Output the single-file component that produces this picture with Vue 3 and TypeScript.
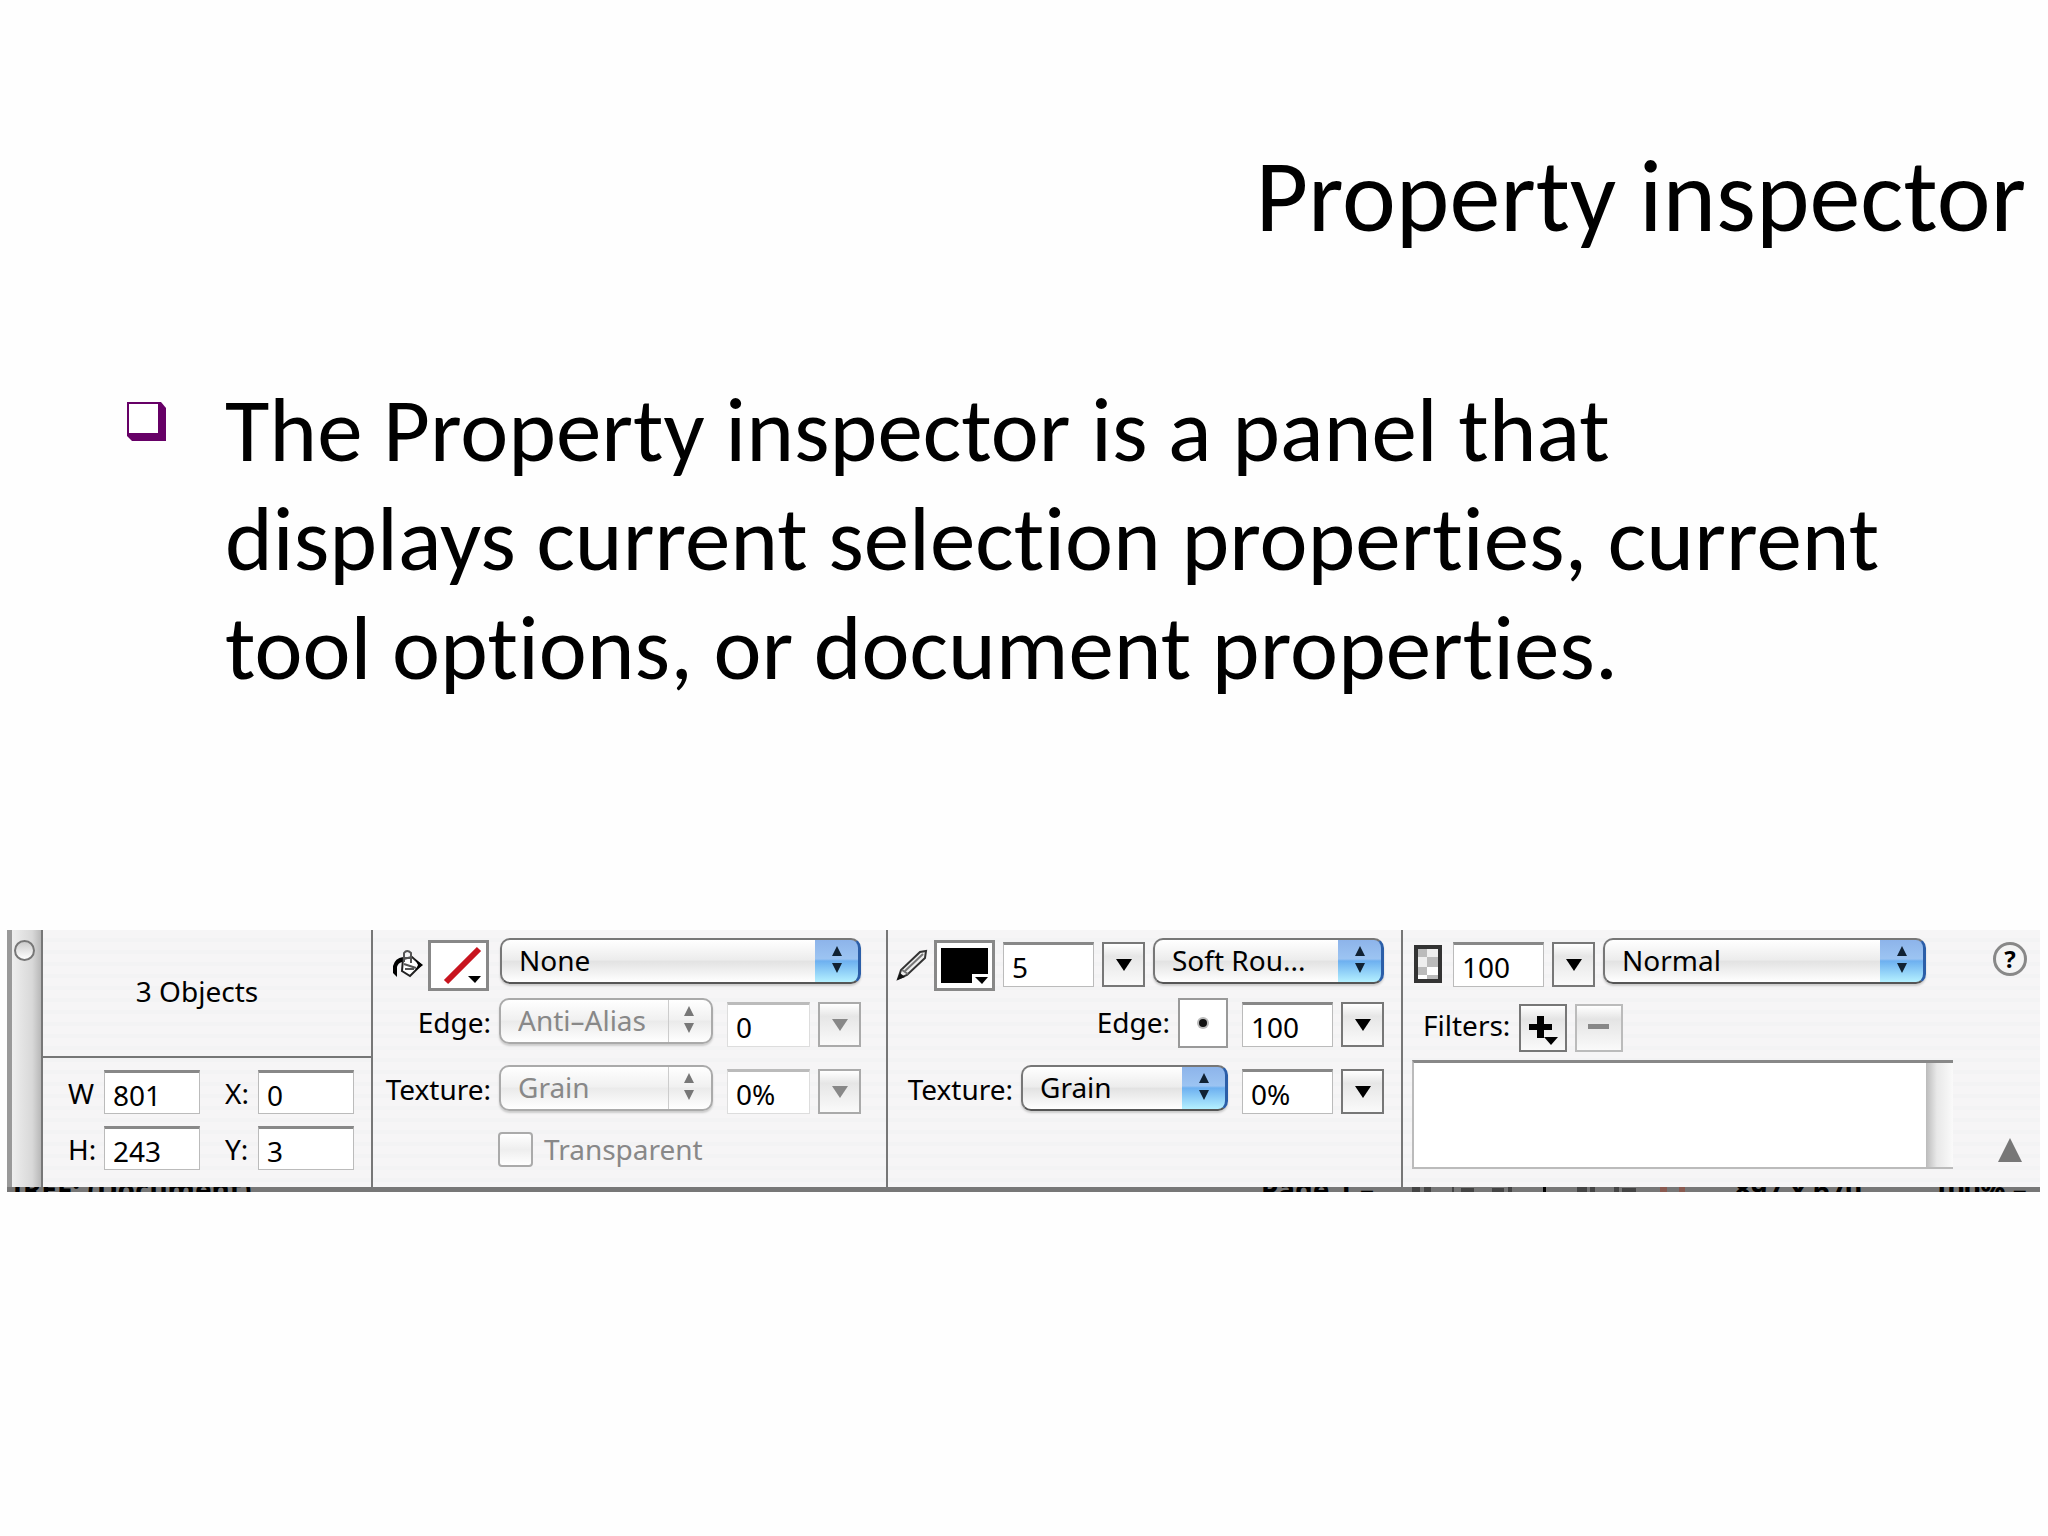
<script setup lang="ts">
import { ref } from 'vue'

const size = ref({ w: '801', h: '243', x: '0', y: '3' })
const fill = ref({ edge: '0', texture: '0%', transparent: false })
const stroke = ref({ size: '5', edge: '100', texture: '0%' })
const opacity = ref('100')
</script>

<template>
  <main class="slide">
    <h1>Property inspector</h1>
    <ul class="points">
      <li>
        <svg class="bullet" width="40" height="40" viewBox="0 0 40 40" aria-hidden="true">
          <path d="M0 0H34L39 6V39H5L0 34Z" fill="#606" />
          <path d="M2 2H31V31H2Z" fill="#fff" />
        </svg>
        <p>The Property inspector is a panel that displays current selection properties, current tool options, or document properties.</p>
      </li>
    </ul>

    <section class="panel" aria-label="Property inspector">
      <div class="sections">
        <div class="handle"><button class="close" aria-label="Close"></button></div>

        <div class="group object">
          <h2>3 Objects</h2>
          <div class="dims">
            <label for="w">W</label><input id="w" v-model="size.w" />
            <label for="x">X:</label><input id="x" v-model="size.x" />
            <label for="h">H:</label><input id="h" v-model="size.h" />
            <label for="y">Y:</label><input id="y" v-model="size.y" />
          </div>
        </div>

        <div class="group fill">
          <div class="row">
            <div class="lead icons">
              <svg class="tool" width="32" height="32" viewBox="0 0 32 32" aria-hidden="true">
                <path d="M11 10L20 8L29 16L18 27L10 22Z" fill="#fff" stroke="#222" stroke-width="2" />
                <path d="M12 13V4Q15 0 19 4V14M11 9H20M12 15L24 19M13 20H22" fill="none" stroke="#555" stroke-width="2" />
                <path d="M11 8Q3 9 1 17V24L5 28V18Q6 14 10 13Z" fill="#000" />
                <path d="M23 10L31 16L23 22L26 16Z" fill="#000" />
              </svg>
              <button class="swatch" aria-label="Fill color">
                <svg width="56" height="46" viewBox="0 0 56 46">
                  <path d="M15 39L48 6" stroke="#c8141e" stroke-width="6" />
                  <path d="M37 33H50L44 40Z" fill="#000" />
                </svg>
              </button>
            </div>
            <span class="popup wide">
              <select aria-label="Fill type"><option>None</option></select>
              <svg width="16" height="28" viewBox="0 0 16 28"><path d="M8 0L13 10H3ZM8 27L13 17H3Z" /></svg>
            </span>
          </div>
          <div class="row">
            <label class="lead" for="fe">Edge:</label>
            <span class="popup off">
              <select id="fe" disabled><option>Anti–Alias</option></select>
              <svg width="16" height="28" viewBox="0 0 16 28"><path d="M8 0L13 10H3ZM8 27L13 17H3Z" /></svg>
            </span>
            <input v-model="fill.edge" class="dim" aria-label="Edge amount" />
            <button class="arrow" disabled aria-label="Edge slider"><svg width="18" height="14" viewBox="0 0 18 14"><path d="M1 1H17L9 13Z" /></svg></button>
          </div>
          <div class="row">
            <label class="lead" for="ft">Texture:</label>
            <span class="popup off">
              <select id="ft" disabled><option>Grain</option></select>
              <svg width="16" height="28" viewBox="0 0 16 28"><path d="M8 0L13 10H3ZM8 27L13 17H3Z" /></svg>
            </span>
            <input v-model="fill.texture" class="dim" aria-label="Texture amount" />
            <button class="arrow" disabled aria-label="Texture slider"><svg width="18" height="14" viewBox="0 0 18 14"><path d="M1 1H17L9 13Z" /></svg></button>
          </div>
          <div class="check">
            <input id="tr" v-model="fill.transparent" type="checkbox" disabled />
            <label for="tr">Transparent</label>
          </div>
        </div>

        <div class="group stroke">
          <div class="row">
            <div class="icons">
              <svg class="tool" width="32" height="32" viewBox="0 0 32 32" aria-hidden="true">
                <path d="M2 30L5 21L24 3L30 2L29 9L11 26Z" fill="#eee" stroke="#333" stroke-width="2" />
                <path d="M6 21L12 25M9 22L27 5" stroke="#777" stroke-width="2" />
                <path d="M1 31L4 24L9 28Z" fill="#111" />
              </svg>
              <button class="swatch" aria-label="Stroke color">
                <svg width="56" height="46" viewBox="0 0 56 46">
                  <path d="M4 5H51V40H4Z" fill="#000" />
                  <path d="M35 31H54V44H35Z" fill="#fff" />
                  <path d="M38 34H51L45 41Z" fill="#000" />
                </svg>
              </button>
            </div>
            <input v-model="stroke.size" aria-label="Tip size" />
            <button class="arrow" aria-label="Tip size slider"><svg width="18" height="14" viewBox="0 0 18 14"><path d="M1 1H17L9 13Z" /></svg></button>
            <span class="popup medium">
              <select aria-label="Stroke category"><option>Soft Rou...</option></select>
              <svg width="16" height="28" viewBox="0 0 16 28"><path d="M8 0L13 10H3ZM8 27L13 17H3Z" /></svg>
            </span>
          </div>
          <div class="row">
            <label for="se">Edge:</label>
            <button class="tip" aria-label="Tip preview"><svg width="14" height="14" viewBox="0 0 14 14"><circle cx="7" cy="7" r="6" fill="#bbb" /><circle cx="7" cy="7" r="4" fill="#111" /></svg></button>
            <input id="se" v-model="stroke.edge" />
            <button class="arrow" aria-label="Edge slider"><svg width="18" height="14" viewBox="0 0 18 14"><path d="M1 1H17L9 13Z" /></svg></button>
          </div>
          <div class="row">
            <label for="st">Texture:</label>
            <span class="popup small">
              <select id="st"><option>Grain</option></select>
              <svg width="16" height="28" viewBox="0 0 16 28"><path d="M8 0L13 10H3ZM8 27L13 17H3Z" /></svg>
            </span>
            <input v-model="stroke.texture" aria-label="Texture amount" />
            <button class="arrow" aria-label="Texture slider"><svg width="18" height="14" viewBox="0 0 18 14"><path d="M1 1H17L9 13Z" /></svg></button>
          </div>
        </div>

        <div class="group effects">
          <div class="body">
            <div class="row">
              <svg class="opacity" width="28" height="38" viewBox="0 0 28 38" aria-hidden="true">
                <path d="M2 2H26V36H2Z" fill="#fff" stroke="#333" stroke-width="4" />
                <path d="M4 4H13V12H4ZM13 12H24V22H13ZM4 22H13V30H4ZM13 30H24V34H13Z" fill="#bbb" />
                <path d="M4 12H13V22H4ZM13 4H24V12H13Z" fill="#eee" />
              </svg>
              <input v-model="opacity" aria-label="Opacity" />
              <button class="arrow" aria-label="Opacity slider"><svg width="18" height="14" viewBox="0 0 18 14"><path d="M1 1H17L9 13Z" /></svg></button>
              <span class="popup stretch">
                <select aria-label="Blend mode"><option>Normal</option></select>
                <svg width="16" height="28" viewBox="0 0 16 28"><path d="M8 0L13 10H3ZM8 27L13 17H3Z" /></svg>
              </span>
            </div>
            <div class="row filters">
              <span>Filters:</span>
              <button class="square" aria-label="Add filter"><svg width="42" height="42" viewBox="0 0 42 42"><path d="M15 9H22V17H30V23H22V31H15V23H7V17H15Z" /><path d="M22 30H36L29 38Z" /></svg></button>
              <button class="square" disabled aria-label="Remove filter"><svg width="42" height="42" viewBox="0 0 42 42"><path d="M10 17H31V22H10Z" /></svg></button>
            </div>
            <div class="list"><div class="track"></div></div>
          </div>
          <div class="side">
            <button class="help" aria-label="Help">?</button>
            <button class="collapse" aria-label="Collapse"><svg width="26" height="24" viewBox="0 0 26 24"><path d="M13 0L25 24H1Z" fill="#777" /></svg></button>
          </div>
        </div>
      </div>
      <div class="status" aria-hidden="true">
        <span>IREF: (Document)</span>
        <span>Page 1 –</span>
        <svg width="280" height="5" viewBox="0 0 280 5">
          <path d="M0 0H8V5H0ZM12 0H19V5H12ZM40 0H42V5H40ZM49 1H62V5H49ZM80 1H92V5H80ZM96 0H100V5H96ZM165 0H175V5H165ZM178 0H183V5H178ZM202 0H207V5H202ZM210 1H224V5H210Z" fill="#444" />
          <path d="M131 0H134V5H131Z" fill="#000" />
          <path d="M248 0H255V5H248ZM267 0H273V5H267Z" fill="#8a5a50" />
        </svg>
        <span>897 x 670</span>
        <span>100% –</span>
      </div>
    </section>
  </main>
</template>

<style>
body {
  margin: 0;
  background: #fefefe;
}
</style>

<style scoped>
* {
  box-sizing: border-box;
}
.slide {
  padding: 142px 8px 0 7px;
  color: #000;
  font-family: Carlito, Calibri, Lato, sans-serif;
  font-variant-ligatures: none;
}
h1 {
  margin: 0 14px 0 0;
  font-size: 102px;
  line-height: 108px;
  font-weight: 400;
  text-align: right;
}
.points {
  margin: 125px 120px 0;
  padding: 0;
  list-style: none;
}
.points li {
  display: flex;
  align-items: flex-start;
  gap: 58px;
}
.bullet {
  flex: none;
  margin-top: 27px;
}
.points p {
  margin: 0;
  font-size: 91px;
  line-height: 109px;
}
.panel {
  margin-top: 228px;
  font-family: "Noto Sans", sans-serif;
  font-size: 28px;
  line-height: 34px;
}
.sections {
  display: grid;
  grid-template-columns: 36px minmax(0, 330fr) minmax(0, 515fr) minmax(0, 515fr) minmax(0, 637fr);
  height: 257px;
  background: repeating-linear-gradient(#f6f5f6 0 8px, #f3f3f4 8px 12px);
}
.status {
  display: grid;
  grid-template-columns: 1252fr 151fr 324fr 198fr 108fr;
  height: 5px;
  padding-left: 5px;
  overflow: hidden;
  background: #777;
  font-weight: 700;
  line-height: 5px;
  white-space: nowrap;
}
.handle {
  padding: 10px 0 0 2px;
  border-left: 5px solid #999;
  border-right: 2px solid #777;
  background: linear-gradient(90deg, #eee, #d8d8d8 70%, #b8b8b8);
}
.group {
  border-right: 2px solid #777;
}
button,
input,
select {
  margin: 0;
  padding: 0;
  border-radius: 0;
  color: #000;
  font: inherit;
  appearance: none;
}
.close {
  display: block;
  width: 21px;
  height: 21px;
  border: 2px solid #777;
  border-radius: 50%;
  background: linear-gradient(#ccc, #fff);
}
h2 {
  display: flex;
  align-items: center;
  justify-content: center;
  height: 128px;
  margin: 0;
  padding: 0 20px 4px 0;
  border-bottom: 2px solid #777;
  font-size: 28px;
  font-weight: 400;
}
.dims {
  display: grid;
  grid-template-columns: 36px 96px 58px 96px;
  row-gap: 12px;
  justify-content: center;
  padding: 12px 0 0 8px;
}
.dims label {
  padding-top: 6px;
}
.dims label:nth-of-type(even) {
  padding-left: 25px;
}
input {
  width: 91px;
  height: 45px;
  padding: 3px 0 0 8px;
  border: 1px solid #bbb;
  border-top: 3px solid #888;
  background: #fff;
}
.dims input {
  width: 96px;
  height: 44px;
}
.fill {
  padding: 8px 25px 0 8px;
}
.row {
  display: flex;
  align-items: flex-start;
  justify-content: flex-end;
  gap: 8px;
  height: 67px;
}
.row:first-child {
  height: 60px;
}
.row > input,
.row > .arrow {
  margin-top: 4px;
}
.row > label {
  padding-top: 7px;
}
.lead {
  flex: 1;
  text-align: right;
}
.icons {
  display: flex;
  justify-content: flex-end;
  gap: 4px;
}
.fill .icons {
  padding-right: 3px;
}
.tool {
  margin-top: 11px;
}
.swatch {
  display: block;
  width: 61px;
  height: 51px;
  margin-top: 2px;
  border: 3px solid #888;
  background: #fff;
}
.swatch svg {
  display: block;
}
.popup {
  position: relative;
  flex: none;
  width: 214px;
  height: 46px;
}
.popup select {
  width: 100%;
  height: 100%;
  padding: 0 48px 3px 17px;
  border: 2px solid #777;
  border-bottom-color: #555;
  border-radius: 10px;
  background:
    linear-gradient(#8db4ea, #9cc4f2 45%, #6db0f0 50%, #b4f0ff) right / 43px 100% no-repeat,
    linear-gradient(#fff, #ececec 48%, #e2e2e2 50%, #fff);
  box-shadow: 0 2px 2px #ccc;
}
.popup:not(.off) select {
  border-right: 3px solid #2b5ea8;
}
.popup svg {
  position: absolute;
  top: 8px;
  right: 16px;
  fill: #123;
  pointer-events: none;
}
.popup.wide {
  width: 361px;
}
.popup.medium {
  width: 231px;
}
.popup.small {
  width: 207px;
}
.popup.off select {
  border-color: #aaa;
  color: #888;
  opacity: 1;
  background:
    linear-gradient(90deg, #ccc 0 1px, transparent 1px) right / 43px 100% no-repeat,
    linear-gradient(#fff, #f0f0f0 48%, #eaeaea 50%, #fff);
}
.popup.off svg {
  fill: #777;
}
.row > .dim {
  width: 83px;
  margin-left: 6px;
  border-color: #bbb #ddd #ddd;
}
.arrow {
  flex: none;
  width: 43px;
  height: 45px;
  border: 2px solid #777;
  background: linear-gradient(#fff, #e6e6e6 30%, #fafafa);
}
.arrow svg {
  display: block;
  margin: 0 auto;
}
.arrow:disabled {
  border-color: #aaa;
}
.arrow:disabled svg,
.square:disabled svg {
  fill: #888;
}
.check {
  display: flex;
  gap: 11px;
  padding-left: 117px;
  color: #888;
}
.check input {
  width: 35px;
  height: 35px;
  padding: 0;
  border: 2px solid #aaa;
  border-radius: 4px;
  background: linear-gradient(#fff, #eee 50%, #fff);
}
.stroke {
  padding: 8px 17px 0 8px;
}
.stroke .icons {
  gap: 6px;
}
.stroke .tip + input,
.stroke .popup + input {
  margin-left: 6px;
}
.tip,
.square {
  display: grid;
  place-items: center;
  width: 50px;
  height: 50px;
  border: 2px solid #999;
  background: #fff;
}
.effects {
  display: flex;
  border: 0;
}
.body {
  flex: 1;
  padding: 8px 0 0 9px;
}
.body .row {
  padding-right: 27px;
}
.opacity {
  margin: 7px 3px 0 2px;
}
.popup.stretch {
  flex: 1;
}
.row.filters {
  justify-content: flex-start;
  height: 62px;
  padding: 6px 0 0 11px;
}
.filters span {
  width: 88px;
  padding-top: 4px;
}
.square {
  width: 48px;
  height: 48px;
  border-color: #777;
  background: linear-gradient(#fff, #e4e4e4 30%, #fafafa);
}
.square:disabled {
  border-color: #bbb;
}
.list {
  display: flex;
  justify-content: flex-end;
  height: 109px;
  border: 2px solid #bbb;
  border-top: 3px solid #888;
  border-right: 0;
  background: #fff;
}
.track {
  width: 27px;
  background: linear-gradient(90deg, #bbb, #e8e8e8 40%, #fafafa);
}
.side {
  display: flex;
  flex: none;
  flex-direction: column;
  align-items: center;
  justify-content: space-between;
  width: 60px;
  margin-left: 27px;
  padding: 12px 0 25px;
}
.help {
  width: 34px;
  height: 34px;
  border: 3px solid #888;
  border-radius: 50%;
  background: #f4f4f4;
  font-size: 24px;
  font-weight: 700;
  line-height: 28px;
}
.collapse {
  border: 0;
  background: none;
}
.collapse svg {
  display: block;
}
</style>
